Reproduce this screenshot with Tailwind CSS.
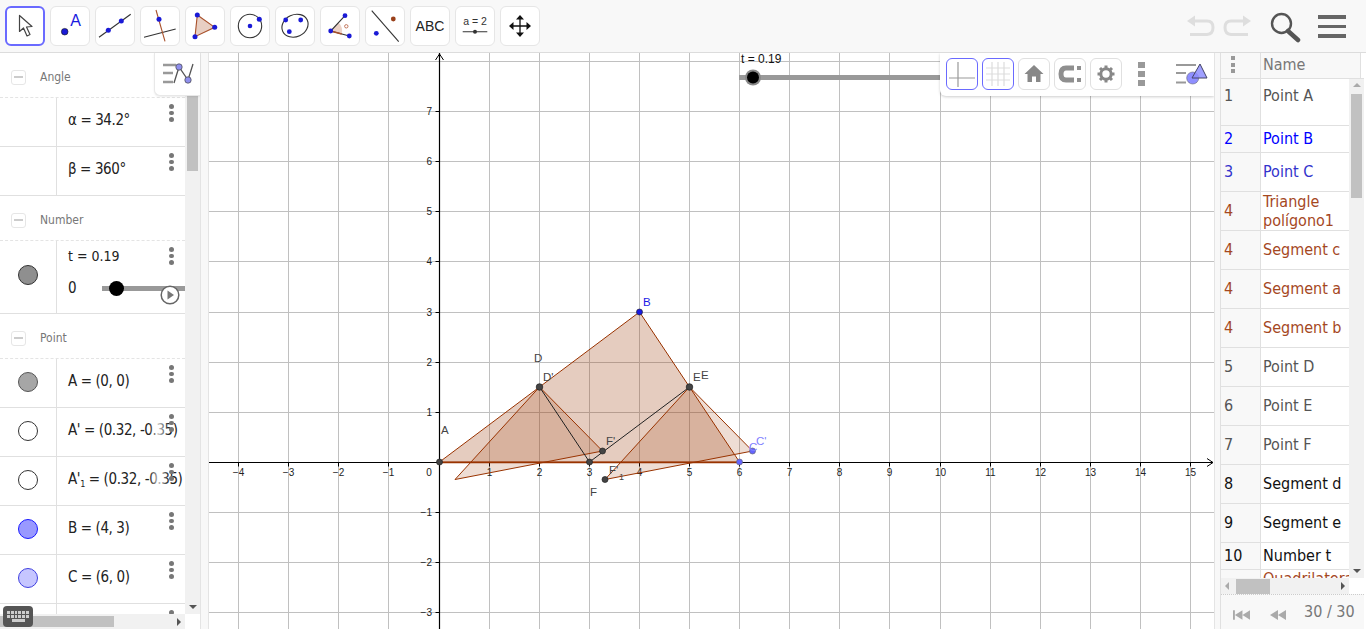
<!DOCTYPE html>
<html>
<head>
<meta charset="utf-8">
<script src="https://cdn.jsdelivr.net/npm/@tailwindcss/browser@4"></script>
</head>
<body class="bg-white overflow-hidden font-['DejaVu_Sans',sans-serif]">
<div class="flex flex-col w-[1366px] h-[629px]">

  <!-- Top toolbar -->
  <header class="h-[53px] shrink-0 bg-[#f8f8f8] border-b border-[#dcdcdc] flex items-start pt-[6px] pl-[5px] gap-[5px] relative">
    <button class="w-10 h-10 rounded-md bg-white border-2 border-[#6a6aff]"><svg viewBox="2 2 36 36" class="w-9 h-9 block"><path d="M14.500 9.500V25.500l4-3.500 3.500 8 3-1.500-3.500-7.500 5.500-.5z" fill="#fff" stroke="#444" stroke-width="1.200" stroke-linejoin="round"/></svg></button>
    <button class="w-10 h-10 rounded-md bg-white border border-[#e6e6e6]"><svg viewBox="1 1 38 38" class="w-[38px] h-[38px] block"><circle cx="14.700" cy="25.700" r="3.300" fill="#1a1ad6" stroke="#111" stroke-width=".6"/><text x="25.700" y="19.500" font-size="16" fill="#1a1ae0" text-anchor="middle" font-family="Liberation Sans">A</text></svg></button>
    <button class="w-10 h-10 rounded-md bg-white border border-[#e6e6e6]"><svg viewBox="1 1 38 38" class="w-[38px] h-[38px] block"><path d="M4 31.300 35.700 8.300" stroke="#333" stroke-width="1.100"/><circle cx="13.300" cy="24.300" r="2.500" fill="#1a1ad6"/><circle cx="26.300" cy="15" r="2.500" fill="#1a1ad6"/></svg></button>
    <button class="w-10 h-10 rounded-md bg-white border border-[#e6e6e6]"><svg viewBox="1 1 38 38" class="w-[38px] h-[38px] block"><path d="M4 31.300 35.700 23" stroke="#333" stroke-width="1.100"/><path d="M16 4 25 35.300" stroke="#a8502a" stroke-width="1.100"/><circle cx="19" cy="13.300" r="2.500" fill="#1a1ad6"/></svg></button>
    <button class="w-10 h-10 rounded-md bg-white border border-[#e6e6e6]"><svg viewBox="1 1 38 38" class="w-[38px] h-[38px] block"><path d="M12.300 9 29.700 21.300 10 30.700z" fill="#e8cfc3" stroke="#a8502a" stroke-width="1.100"/><circle cx="12.300" cy="9" r="2.500" fill="#1a1ad6"/><circle cx="29.700" cy="21.300" r="2.500" fill="#1a1ad6"/><circle cx="10" cy="30.700" r="2.500" fill="#1a1ad6"/></svg></button>
    <button class="w-10 h-10 rounded-md bg-white border border-[#e6e6e6]"><svg viewBox="1 1 38 38" class="w-[38px] h-[38px] block"><circle cx="20" cy="20" r="11.700" fill="none" stroke="#333" stroke-width="1.100"/><circle cx="20" cy="20" r="2.300" fill="#1a1ad6"/><circle cx="29.300" cy="13.300" r="2.500" fill="#1a1ad6"/></svg></button>
    <button class="w-10 h-10 rounded-md bg-white border border-[#e6e6e6]"><svg viewBox="1 1 38 38" class="w-[38px] h-[38px] block"><ellipse cx="20" cy="19.700" rx="13.500" ry="11" transform="rotate(-25 20 19.700)" fill="none" stroke="#333" stroke-width="1.100"/><circle cx="10.700" cy="14" r="2.400" fill="#1a1ad6"/><circle cx="25.700" cy="14" r="2.400" fill="#1a1ad6"/><circle cx="14.300" cy="25.700" r="2.400" fill="#1a1ad6"/></svg></button>
    <button class="w-10 h-10 rounded-md bg-white border border-[#e6e6e6]"><svg viewBox="1 1 38 38" class="w-[38px] h-[38px] block"><path d="M10.700 25 18.500 16.600A12 12 0 0 1 21.700 28z" fill="#ecd2c6"/><path d="M25 9.700 10.700 25 29.300 30" fill="none" stroke="#333" stroke-width="1.100"/><path d="M10.700 25 21.700 28" stroke="#a8502a" stroke-width="1.400"/><circle cx="26.300" cy="20.300" r="1.700" fill="none" stroke="#b5593a" stroke-width=".8"/><circle cx="10.700" cy="25" r="2.400" fill="#1a1ad6"/><circle cx="25" cy="9.700" r="2.400" fill="#1a1ad6"/><circle cx="29.300" cy="30" r="2.400" fill="#1a1ad6"/></svg></button>
    <button class="w-10 h-10 rounded-md bg-white border border-[#e6e6e6]"><svg viewBox="1 1 38 38" class="w-[38px] h-[38px] block"><path d="M6.700 4.700 33.700 35.700" stroke="#333" stroke-width="1.100"/><circle cx="11.300" cy="27.300" r="2.400" fill="#1a1ad6"/><circle cx="28.300" cy="13" r="2.400" fill="#99401a"/></svg></button>
    <button class="w-10 h-10 rounded-md bg-white border border-[#e6e6e6] text-[14px] text-[#222] font-['Liberation_Sans',sans-serif] leading-none">ABC</button>
    <button class="w-10 h-10 rounded-md bg-white border border-[#e6e6e6]"><svg viewBox="1 1 38 38" class="w-[38px] h-[38px] block"><text x="20" y="19" font-size="10.500" fill="#333" text-anchor="middle" font-family="Liberation Sans">a = 2</text><path d="M7.700 25.700H32.300" stroke="#555" stroke-width="1.200"/><circle cx="20" cy="25.700" r="2" fill="#333"/></svg></button>
    <button class="w-10 h-10 rounded-md bg-white border border-[#e6e6e6]"><svg viewBox="1 1 38 38" class="w-[38px] h-[38px] block"><path d="M20 12V28M12 20H28" stroke="#111" stroke-width="1.300"/><path d="M20 9l-4 4.500h8zM20 31l-4-4.500h8zM9 20l4.500-4v8zM31 20l-4.500-4v8z" fill="#111"/></svg></button>

    <div class="ml-auto flex items-start h-10">
      <svg viewBox="0 0 30 26" class="w-[30px] h-[26px] mt-[9px] mr-[6px] block"><path d="M9 6H21Q27 6 27 12.500T21 19.500H4" fill="none" stroke="#dedede" stroke-width="3"/><path d="M1 6 9 .5V11.500z" fill="#dedede"/></svg>
      <svg viewBox="0 0 30 26" class="w-[30px] h-[26px] mt-[9px] mr-[17px] block"><path d="M21 6H9Q3 6 3 12.500T9 19.500H26" fill="none" stroke="#dedede" stroke-width="3"/><path d="M29 6 21 .5V11.500z" fill="#dedede"/></svg>
      <svg viewBox="0 0 32 32" class="w-8 h-8 mt-[6px] mr-[17px] block"><circle cx="12.500" cy="11.500" r="9.500" fill="none" stroke="#555" stroke-width="2.400"/><path d="M19 19 29 28" stroke="#555" stroke-width="4.500" stroke-linecap="round"/></svg>
      <div class="w-7 mr-[20px] mt-[9px] flex flex-col gap-[6px]">
        <div class="h-[3.500px] bg-[#666]"></div><div class="h-[3.500px] bg-[#666]"></div><div class="h-[3.500px] bg-[#666]"></div>
      </div>
    </div>
  </header>

  <main class="flex-1 min-h-0 flex">
    <!-- Algebra panel -->
    <section class="w-[200px] shrink-0 relative flex flex-col text-[#222] font-['DejaVu_Sans_Condensed','DejaVu_Sans',sans-serif]">
      <div class="flex-1 min-h-0 flex">
        <div class="w-[185px] overflow-hidden">
          <div class="h-[45px] pt-[4px] border-b border-dashed border-[#e4e4e4] flex items-center pl-[11px] gap-[14px]"><span class="w-[15px] h-[15px] border border-[#e6e6e6] rounded-[3px] flex items-center justify-center"><span class="w-[9px] h-[1.500px] bg-[#ccc]"></span></span><span class="text-[12px] text-[#777]">Angle</span></div>

          <div class="h-[49px] border-b border-[#e0e0e0] flex"><div class="w-[57px] shrink-0 border-r border-[#e0e0e0]"></div><div class="flex-1 min-w-0 relative pl-[11px] pb-[3px] flex items-center whitespace-nowrap text-[15px] tracking-[-0.4px]">α = 34.2°<div class="absolute left-[112px] top-[6px] flex flex-col gap-[2.200px]"><i class="w-[4.500px] h-[4.500px] rounded-full bg-[#777]"></i><i class="w-[4.500px] h-[4.500px] rounded-full bg-[#777]"></i><i class="w-[4.500px] h-[4.500px] rounded-full bg-[#777]"></i></div></div></div>
          <div class="h-[49px] border-b border-[#e0e0e0] flex"><div class="w-[57px] shrink-0 border-r border-[#e0e0e0]"></div><div class="flex-1 min-w-0 relative pl-[11px] pb-[3px] flex items-center whitespace-nowrap text-[15px] tracking-[-0.4px]">β = 360°<div class="absolute left-[112px] top-[6px] flex flex-col gap-[2.200px]"><i class="w-[4.500px] h-[4.500px] rounded-full bg-[#777]"></i><i class="w-[4.500px] h-[4.500px] rounded-full bg-[#777]"></i><i class="w-[4.500px] h-[4.500px] rounded-full bg-[#777]"></i></div></div></div>

          <div class="h-[45px] pt-[4px] border-b border-dashed border-[#e4e4e4] flex items-center pl-[11px] gap-[14px]"><span class="w-[15px] h-[15px] border border-[#e6e6e6] rounded-[3px] flex items-center justify-center"><span class="w-[9px] h-[1.500px] bg-[#ccc]"></span></span><span class="text-[12px] text-[#777]">Number</span></div>

          <div class="h-[73px] border-b border-[#e0e0e0] flex">
            <div class="w-[57px] shrink-0 border-r border-[#e0e0e0] flex items-center justify-center pb-[5px]"><span class="w-5 h-5 rounded-full bg-[#8f8f8f] border border-[#333]"></span></div>
            <div class="flex-1 min-w-0 relative pl-[11px] whitespace-nowrap text-[14px]">
              <div class="pt-[7px] leading-[17px]">t = 0.19</div>
              <div class="mt-[13px] leading-[20px] text-[15px]">0</div>
              <div class="absolute left-[45px] right-0 top-[45px] h-[5px] bg-[#999]"></div>
              <div class="absolute left-[52px] top-[40px] w-[15px] h-[15px] rounded-full bg-black"></div>
              <svg viewBox="0 0 20 20" class="absolute left-[103px] top-[44px] w-5 h-5"><circle cx="10" cy="10" r="8.800" fill="#fff" stroke="#666" stroke-width="1.500"/><path d="M7.500 5.500 14 10 7.500 14.500z" fill="#777"/></svg>
              <div class="absolute left-[112px] top-[6px] flex flex-col gap-[2.200px]"><i class="w-[4.500px] h-[4.500px] rounded-full bg-[#777]"></i><i class="w-[4.500px] h-[4.500px] rounded-full bg-[#777]"></i><i class="w-[4.500px] h-[4.500px] rounded-full bg-[#777]"></i></div>
            </div>
          </div>

          <div class="h-[45px] pt-[4px] border-b border-dashed border-[#e4e4e4] flex items-center pl-[11px] gap-[14px]"><span class="w-[15px] h-[15px] border border-[#e6e6e6] rounded-[3px] flex items-center justify-center"><span class="w-[9px] h-[1.500px] bg-[#ccc]"></span></span><span class="text-[12px] text-[#777]">Point</span></div>

          <div class="h-[49px] border-b border-[#e0e0e0] flex"><div class="w-[57px] shrink-0 border-r border-[#e0e0e0] flex items-center justify-center pb-[3px]"><span class="w-5 h-5 rounded-full bg-[#a6a6a6] border border-[#555]"></span></div><div class="flex-1 min-w-0 relative pl-[11px] pb-[3px] flex items-center whitespace-nowrap text-[15px] tracking-[-0.4px]">A = (0, 0)<div class="absolute left-[112px] top-[6px] flex flex-col gap-[2.200px]"><i class="w-[4.500px] h-[4.500px] rounded-full bg-[#777]"></i><i class="w-[4.500px] h-[4.500px] rounded-full bg-[#777]"></i><i class="w-[4.500px] h-[4.500px] rounded-full bg-[#777]"></i></div></div></div>
          <div class="h-[49px] border-b border-[#e0e0e0] flex"><div class="w-[57px] shrink-0 border-r border-[#e0e0e0] flex items-center justify-center pb-[3px]"><span class="w-5 h-5 rounded-full bg-white border border-[#333]"></span></div><div class="flex-1 min-w-0 relative pl-[11px] pb-[3px] flex items-center whitespace-nowrap text-[15px] tracking-[-0.4px]">A' = (0.32, -0.35)<div class="absolute left-[92px] top-0 bottom-0 w-[20px] bg-linear-to-r from-transparent via-white/70 to-transparent"></div><div class="absolute left-[112px] top-[6px] flex flex-col gap-[2.200px]"><i class="w-[4.500px] h-[4.500px] rounded-full bg-[#777]"></i><i class="w-[4.500px] h-[4.500px] rounded-full bg-[#777]"></i><i class="w-[4.500px] h-[4.500px] rounded-full bg-[#777]"></i></div></div></div>
          <div class="h-[49px] border-b border-[#e0e0e0] flex"><div class="w-[57px] shrink-0 border-r border-[#e0e0e0] flex items-center justify-center pb-[3px]"><span class="w-5 h-5 rounded-full bg-white border border-[#333]"></span></div><div class="flex-1 min-w-0 relative pl-[11px] pb-[3px] flex items-center whitespace-nowrap text-[15px] tracking-[-0.4px]"><span>A'<sub class="text-[9px]">1</sub> = (0.32, -0.35)</span><div class="absolute left-[92px] top-0 bottom-0 w-[20px] bg-linear-to-r from-transparent via-white/70 to-transparent"></div><div class="absolute left-[112px] top-[6px] flex flex-col gap-[2.200px]"><i class="w-[4.500px] h-[4.500px] rounded-full bg-[#777]"></i><i class="w-[4.500px] h-[4.500px] rounded-full bg-[#777]"></i><i class="w-[4.500px] h-[4.500px] rounded-full bg-[#777]"></i></div></div></div>
          <div class="h-[49px] border-b border-[#e0e0e0] flex"><div class="w-[57px] shrink-0 border-r border-[#e0e0e0] flex items-center justify-center pb-[3px]"><span class="w-5 h-5 rounded-full bg-[#9999ff] border border-[#1a1aff]"></span></div><div class="flex-1 min-w-0 relative pl-[11px] pb-[3px] flex items-center whitespace-nowrap text-[15px] tracking-[-0.4px]">B = (4, 3)<div class="absolute left-[112px] top-[6px] flex flex-col gap-[2.200px]"><i class="w-[4.500px] h-[4.500px] rounded-full bg-[#777]"></i><i class="w-[4.500px] h-[4.500px] rounded-full bg-[#777]"></i><i class="w-[4.500px] h-[4.500px] rounded-full bg-[#777]"></i></div></div></div>
          <div class="h-[49px] border-b border-[#e0e0e0] flex"><div class="w-[57px] shrink-0 border-r border-[#e0e0e0] flex items-center justify-center pb-[3px]"><span class="w-5 h-5 rounded-full bg-[#c6c6ff] border border-[#4040e0]"></span></div><div class="flex-1 min-w-0 relative pl-[11px] pb-[3px] flex items-center whitespace-nowrap text-[15px] tracking-[-0.4px]">C = (6, 0)<div class="absolute left-[112px] top-[6px] flex flex-col gap-[2.200px]"><i class="w-[4.500px] h-[4.500px] rounded-full bg-[#777]"></i><i class="w-[4.500px] h-[4.500px] rounded-full bg-[#777]"></i><i class="w-[4.500px] h-[4.500px] rounded-full bg-[#777]"></i></div></div></div>
          <div class="h-[49px] flex"><div class="w-[57px] shrink-0 border-r border-[#e0e0e0]"></div><div class="flex-1 relative"><div class="absolute left-[112px] top-[6px] flex flex-col gap-[2.200px]"><i class="w-[4.500px] h-[4.500px] rounded-full bg-[#777]"></i><i class="w-[4.500px] h-[4.500px] rounded-full bg-[#777]"></i></div></div></div>
        </div>
        <!-- vertical scrollbar -->
        <div class="w-[15px] bg-[#f1f1f1] flex flex-col items-center relative">
          <div class="w-[11px] h-[118px] bg-[#c1c1c1]"></div>
          <div class="mt-auto mb-[5px] w-0 h-0 border-x-[4px] border-x-transparent border-t-[4px] border-t-[#555]"></div>
        </div>
      </div>
      <!-- horizontal scrollbar -->
      <div class="h-[15px] w-[185px] bg-[#f1f1f1] flex items-center shrink-0">
        <div class="w-[114px] h-[11px] bg-[#c1c1c1]"></div>
        <div class="ml-auto mr-[4px] w-0 h-0 border-y-[4px] border-y-transparent border-l-[4px] border-l-[#555]"></div>
      </div>
      <!-- keyboard -->
      <div class="absolute left-[3px] bottom-[2px] w-[30px] h-[21px] rounded-[4px] bg-[#555] flex flex-col items-center justify-center gap-[1px]">
        <div class="grid grid-cols-6 gap-[1px] w-[22px]"><i class="h-[3px] bg-[#ccc]"></i><i class="h-[3px] bg-[#ccc]"></i><i class="h-[3px] bg-[#ccc]"></i><i class="h-[3px] bg-[#ccc]"></i><i class="h-[3px] bg-[#ccc]"></i><i class="h-[3px] bg-[#ccc]"></i><i class="h-[3px] bg-[#ccc]"></i><i class="h-[3px] bg-[#ccc]"></i><i class="h-[3px] bg-[#ccc]"></i><i class="h-[3px] bg-[#ccc]"></i><i class="h-[3px] bg-[#ccc]"></i><i class="h-[3px] bg-[#ccc]"></i></div>
        <div class="w-[13px] h-[3px] bg-[#ccc]"></div>
      </div>
      <!-- algebra style toggle -->
      <div class="absolute right-0 top-0 w-[46px] h-[43px] bg-white rounded-bl-md border-l border-b border-[#e8e8e8] shadow-[0_1px_2px_rgba(0,0,0,0.08)]">
        <svg viewBox="0 0 46 43" class="w-[46px] h-[43px] block"><path d="M8 12H21M8 20H18M8 29H18" stroke="#999" stroke-width="2.500"/><path d="M19 30 24 14 33 27 38 11" fill="none" stroke="#555" stroke-width="1.300"/><circle cx="24" cy="14" r="3.200" fill="#8f8fee" stroke="#444" stroke-width=".7"/><circle cx="33" cy="27" r="3.200" fill="#8f8fee" stroke="#444" stroke-width=".7"/></svg>
      </div>
    </section>

    <div class="w-[8px] shrink-0 bg-[#f8f8f8] border-l border-[#e4e4e4]"></div>

    <!-- Graphics view -->
    <section class="w-[1006px] shrink-0 relative border-l border-[#e4e4e4] overflow-hidden">
      <svg viewBox="209 53 1005 576" class="w-[1005px] h-[576px] block">
        <path d="M238.500 53V629M288.500 53V629M338.500 53V629M388.500 53V629M489.500 53V629M539.500 53V629M589.500 53V629M639.500 53V629M689.500 53V629M739.500 53V629M789.500 53V629M839.500 53V629M889.500 53V629M940.500 53V629M990.500 53V629M1040.500 53V629M1090.500 53V629M1140.500 53V629M1190.500 53V629M209 61.500H1214M209 111.500H1214M209 161.500H1214M209 211.500H1214M209 261.500H1214M209 312.500H1214M209 362.500H1214M209 412.500H1214M209 512.500H1214M209 562.500H1214M209 612.500H1214" stroke="#c0c0c0" stroke-width="1" fill="none"/>
        <path d="M439.500 53V629M209 462.500H1213" stroke="#000" stroke-width="1.200" fill="none"/>
        <path d="M435.500 60 439.500 54 443.500 60M1207 458.500 1213 462.500 1207 466.500" fill="none" stroke="#000" stroke-width="1"/>
        <path d="M238.500 462.500v4M288.500 462.500v4M338.500 462.500v4M388.500 462.500v4M489.500 462.500v4M539.500 462.500v4M589.500 462.500v4M639.500 462.500v4M689.500 462.500v4M739.500 462.500v4M789.500 462.500v4M839.500 462.500v4M889.500 462.500v4M940.500 462.500v4M990.500 462.500v4M1040.500 462.500v4M1090.500 462.500v4M1140.500 462.500v4M1190.500 462.500v4M439.500 111.500h-4M439.500 161.500h-4M439.500 211.500h-4M439.500 261.500h-4M439.500 312.500h-4M439.500 362.500h-4M439.500 412.500h-4M439.500 512.500h-4M439.500 562.500h-4M439.500 612.500h-4" stroke="#000" stroke-width="1" fill="none"/>

        <g font-family="Liberation Sans" font-size="10" fill="#222" text-anchor="middle">
          <text x="238.500" y="476">−4</text><text x="288.500" y="476">−3</text><text x="338.500" y="476">−2</text><text x="388.500" y="476">−1</text><text x="429" y="476">0</text><text x="489.500" y="476">1</text><text x="539.500" y="476">2</text><text x="589.500" y="476">3</text><text x="639.500" y="476">4</text><text x="689.500" y="476">5</text><text x="739.500" y="476">6</text><text x="789.500" y="476">7</text><text x="839.500" y="476">8</text><text x="889.500" y="476">9</text><text x="940.500" y="476">10</text><text x="990.500" y="476">11</text><text x="1040.500" y="476">12</text><text x="1090.500" y="476">13</text><text x="1140.500" y="476">14</text><text x="1190.500" y="476">15</text>
        </g>
        <g font-family="Liberation Sans" font-size="10" fill="#222" text-anchor="end">
          <text x="432" y="115">7</text><text x="432" y="165">6</text><text x="432" y="215">5</text><text x="432" y="265">4</text><text x="432" y="316">3</text><text x="432" y="366">2</text><text x="432" y="416">1</text><text x="432" y="516">−1</text><text x="432" y="566">−2</text><text x="432" y="616">−3</text>
        </g>

        <g stroke="#993300" stroke-width="1" stroke-linejoin="round">
          <path d="M439.500 462 639.500 312 739.500 462z" fill="#993300" fill-opacity=".25"/>
          <path d="M455 479.500 539.500 387 602.500 451z" fill="#993300" fill-opacity=".17"/>
          <path d="M605 479.500 689.500 387 752.500 451z" fill="#993300" fill-opacity=".17"/>
          <path d="M439.500 462.500H739.500" stroke-width="1.600"/>
        </g>
        <path d="M539.500 387 589.500 462 689.500 387" fill="none" stroke="#222" stroke-width="1"/>
        <circle cx="439.500" cy="462" r="3" fill="#444" stroke="#222" stroke-width=".7"/>
        <circle cx="639.500" cy="312" r="3" fill="#1a1ae6" stroke="#223" stroke-width=".7"/>
        <circle cx="539.500" cy="387" r="3.300" fill="#444" stroke="#222" stroke-width=".7"/>
        <circle cx="689.500" cy="387" r="3.300" fill="#444" stroke="#222" stroke-width=".7"/>
        <circle cx="589.500" cy="462" r="3" fill="#444" stroke="#222" stroke-width=".7"/>
        <circle cx="739.500" cy="462" r="3" fill="#6464ff" stroke="#667" stroke-width=".7"/>
        <circle cx="602.500" cy="451" r="3" fill="#444" stroke="#222" stroke-width=".7"/>
        <circle cx="605" cy="479.500" r="3" fill="#444" stroke="#222" stroke-width=".7"/>
        <circle cx="752.500" cy="451" r="3" fill="#6464ff" stroke="#667" stroke-width=".7"/>

        <g font-family="Liberation Sans" font-size="11.500" fill="#444">
          <text x="441" y="434">A</text>
          <text x="643" y="306" fill="#1a1ae6">B</text>
          <text x="534" y="362">D</text>
          <text x="543" y="381">D'</text>
          <text x="693" y="381">E</text>
          <text x="701" y="379">E</text>
          <text x="606" y="445">F'</text>
          <text x="590" y="496">F</text>
          <text x="609" y="474">F'</text>
          <text x="619" y="480" font-size="9">1</text>
          <text x="749" y="451" fill="#8080ff">C</text>
          <text x="756" y="445" fill="#8080ff">C'</text>
        </g>

        <text x="741" y="63" font-family="Liberation Sans" font-size="12" fill="#111">t = 0.19</text>
        <path d="M739 77.500H945" stroke="#999" stroke-width="5"/>
        <circle cx="753" cy="77.500" r="8" fill="#888"/>
        <circle cx="753" cy="77.500" r="6" fill="#000"/>
      </svg>

      <!-- style bar -->
      <div class="absolute right-0 top-0 w-[274px] h-[43px] bg-white rounded-bl-md shadow-[0_1px_3px_rgba(0,0,0,0.2)] flex items-start pt-[5px] pl-[6px] gap-[4px]">
        <div class="w-8 h-8 rounded-md border border-[#6a6aff] bg-white"><svg viewBox="0 0 30 30" class="w-[30px] h-[30px] block"><path d="M11 3V28M2 19H28" stroke="#999" stroke-width="1.200"/></svg></div>
        <div class="w-8 h-8 rounded-md border border-[#6a6aff] bg-white"><svg viewBox="0 0 30 30" class="w-[30px] h-[30px] block"><path d="M9 3V27M15 3V27M21 3V27M3 9H27M3 15H27M3 21H27" stroke="#ddd" stroke-width="1.200"/></svg></div>
        <div class="w-8 h-8 rounded-md border border-[#e0e0e0] bg-white"><svg viewBox="0 0 30 30" class="w-[30px] h-[30px] block"><path d="M15 6 5.500 15H8.500V23H13V17.500H17V23H21.500V15H24.500z" fill="#888"/></svg></div>
        <div class="w-8 h-8 rounded-md border border-[#e0e0e0] bg-white"><svg viewBox="0 0 30 30" class="w-[30px] h-[30px] block"><path d="M19 9H11Q6 9 6 15T11 21H19" fill="none" stroke="#8f8f8f" stroke-width="5"/><path d="M22 7H26V11H22zM22 19H26V23H22z" fill="#8f8f8f"/></svg></div>
        <div class="w-8 h-8 rounded-md border border-[#e0e0e0] bg-white"><svg viewBox="0 0 30 30" class="w-[30px] h-[30px] block"><circle cx="15" cy="15" r="5.200" fill="none" stroke="#888" stroke-width="3"/><path d="M15 6.500V9M15 21V23.500M6.500 15H9M21 15H23.500M9 9 10.800 10.800M19.200 19.200 21 21M21 9 19.200 10.800M10.800 19.200 9 21" stroke="#888" stroke-width="3"/></svg></div>
        <div class="w-[6.500px] ml-[12px] mt-[4px] flex flex-col gap-[3.500px]"><i class="block h-[5.500px] bg-[#999]"></i><i class="block h-[5.500px] bg-[#999]"></i><i class="block h-[5.500px] bg-[#999]"></i></div>
        <svg viewBox="0 0 36 30" class="w-9 h-[30px] ml-[25px] block"><path d="M2 7H22M2 15H12M2 24.500H12" stroke="#999" stroke-width="2"/><circle cx="18.700" cy="20" r="6" fill="#8f8fff" stroke="#667" stroke-width=".6"/><path d="M26 6 33 20H18z" fill="#8f8fff" fill-opacity=".85" stroke="#446" stroke-width="1"/></svg>
      </div>
    </section>

    <div class="w-[6px] shrink-0 bg-[#f8f8f8] border-l border-[#e4e4e4]"></div>

    <!-- Table panel -->
    <section class="flex-1 min-w-0 flex flex-col border-l border-[#e0e0e0] text-[16px] mr-[2px] font-['DejaVu_Sans_Condensed','DejaVu_Sans',sans-serif]">
      <div class="h-[26px] shrink-0 flex border-b border-[#e0e0e0]">
        <div class="w-[40px] bg-[#f8f8f8] border-r border-[#e0e0e0] flex flex-col items-center pt-[3px] pr-[16px] gap-[2.500px]"><i class="w-1 h-1 bg-[#999]"></i><i class="w-1 h-1 bg-[#999]"></i><i class="w-1 h-1 bg-[#999]"></i></div>
        <div class="w-[100px] bg-[#f8f8f8] border-r border-[#e0e0e0] pl-[2px] text-[#777] leading-[23px]">Name</div>
      </div>
      <div class="flex-1 min-h-0 flex">
        <div class="w-[128px] overflow-hidden">
          <div class="h-[47px] flex border-b border-[#e0e0e0] text-[#555]"><div class="w-[40px] shrink-0 bg-[#f8f8f8] border-r border-[#e0e0e0] pl-[3px] pt-[5px]">1</div><div class="flex-1 min-w-0 pl-[2px] pt-[5px]">Point A</div></div>
          <div class="h-[27px] flex items-center border-b border-[#e0e0e0] text-[#0000ff]"><div class="w-[40px] shrink-0 h-full flex items-center bg-[#f8f8f8] border-r border-[#e0e0e0] pl-[3px]">2</div><div class="flex-1 min-w-0 pl-[2px]">Point B</div></div>
          <div class="h-[39px] flex items-center border-b border-[#e0e0e0] text-[#3333cc]"><div class="w-[40px] shrink-0 h-full flex items-center bg-[#f8f8f8] border-r border-[#e0e0e0] pl-[3px]">3</div><div class="flex-1 min-w-0 pl-[2px]">Point C</div></div>
          <div class="h-[39px] flex items-center border-b border-[#e0e0e0] text-[#a5481f]"><div class="w-[40px] shrink-0 h-full flex items-center bg-[#f8f8f8] border-r border-[#e0e0e0] pl-[3px]">4</div><div class="flex-1 min-w-0 pl-[2px] leading-[19px] whitespace-nowrap">Triangle<br>polígono1</div></div>
          <div class="h-[39px] flex items-center border-b border-[#e0e0e0] text-[#a5481f]"><div class="w-[40px] shrink-0 h-full flex items-center bg-[#f8f8f8] border-r border-[#e0e0e0] pl-[3px]">4</div><div class="flex-1 min-w-0 pl-[2px]">Segment c</div></div>
          <div class="h-[39px] flex items-center border-b border-[#e0e0e0] text-[#a5481f]"><div class="w-[40px] shrink-0 h-full flex items-center bg-[#f8f8f8] border-r border-[#e0e0e0] pl-[3px]">4</div><div class="flex-1 min-w-0 pl-[2px]">Segment a</div></div>
          <div class="h-[39px] flex items-center border-b border-[#e0e0e0] text-[#a5481f]"><div class="w-[40px] shrink-0 h-full flex items-center bg-[#f8f8f8] border-r border-[#e0e0e0] pl-[3px]">4</div><div class="flex-1 min-w-0 pl-[2px]">Segment b</div></div>
          <div class="h-[39px] flex items-center border-b border-[#e0e0e0] text-[#555]"><div class="w-[40px] shrink-0 h-full flex items-center bg-[#f8f8f8] border-r border-[#e0e0e0] pl-[3px]">5</div><div class="flex-1 min-w-0 pl-[2px]">Point D</div></div>
          <div class="h-[39px] flex items-center border-b border-[#e0e0e0] text-[#555]"><div class="w-[40px] shrink-0 h-full flex items-center bg-[#f8f8f8] border-r border-[#e0e0e0] pl-[3px]">6</div><div class="flex-1 min-w-0 pl-[2px]">Point E</div></div>
          <div class="h-[39px] flex items-center border-b border-[#e0e0e0] text-[#555]"><div class="w-[40px] shrink-0 h-full flex items-center bg-[#f8f8f8] border-r border-[#e0e0e0] pl-[3px]">7</div><div class="flex-1 min-w-0 pl-[2px]">Point F</div></div>
          <div class="h-[39px] flex items-center border-b border-[#e0e0e0] text-[#111]"><div class="w-[40px] shrink-0 h-full flex items-center bg-[#f8f8f8] border-r border-[#e0e0e0] pl-[3px]">8</div><div class="flex-1 min-w-0 pl-[2px]">Segment d</div></div>
          <div class="h-[39px] flex items-center border-b border-[#e0e0e0] text-[#111]"><div class="w-[40px] shrink-0 h-full flex items-center bg-[#f8f8f8] border-r border-[#e0e0e0] pl-[3px]">9</div><div class="flex-1 min-w-0 pl-[2px]">Segment e</div></div>
          <div class="h-[27px] flex items-center border-b border-[#e0e0e0] text-[#111]"><div class="w-[40px] shrink-0 h-full flex items-center bg-[#f8f8f8] border-r border-[#e0e0e0] pl-[3px]">10</div><div class="flex-1 min-w-0 pl-[2px]">Number t</div></div>
          <div class="h-[39px] flex text-[#a5481f]"><div class="w-[40px] shrink-0 h-full bg-[#f8f8f8] border-r border-[#e0e0e0]"></div><div class="flex-1 min-w-0 pl-[2px] whitespace-nowrap leading-[18px]">Quadrilatera</div></div>
        </div>
        <div class="w-[15px] bg-[#f1f1f1] flex flex-col items-center">
          <div class="mt-[4px] w-0 h-0 border-x-[4px] border-x-transparent border-b-[4px] border-b-[#aaa]"></div>
          <div class="mt-[7px] w-[11px] h-[104px] bg-[#c1c1c1]"></div>
          <div class="mt-auto mb-[5px] w-0 h-0 border-x-[4px] border-x-transparent border-t-[4px] border-t-[#555]"></div>
        </div>
      </div>
      <div class="h-[16px] shrink-0 flex">
        <div class="w-[128px] bg-[#f1f1f1] flex items-center relative">
          <div class="ml-[4px] w-0 h-0 border-y-[4px] border-y-transparent border-r-[4px] border-r-[#aaa]"></div>
          <div class="ml-[7px] w-[34px] h-[15px] bg-[#c1c1c1]"></div>
          <div class="ml-auto mr-[4px] w-0 h-0 border-y-[4px] border-y-transparent border-l-[4px] border-l-[#555]"></div>
        </div>
      </div>
      <div class="h-[35px] shrink-0 border-t border-dotted border-[#ccc] bg-[#f8f8f8] flex items-center text-[#777]">
        <svg viewBox="0 0 18 10" class="w-[17px] h-[10px] ml-[12px] mt-[5px] block"><path d="M0 0H2V10H0zM10 0V10L2 5zM18 0V10L10 5z" fill="#aaa"/></svg>
        <svg viewBox="0 0 16 10" class="w-[16px] h-[10px] ml-[20px] mt-[5px] block"><path d="M8 0V10L0 5zM16 0V10L8 5z" fill="#aaa"/></svg>
        <span class="ml-[18px] whitespace-nowrap">30 / 30</span>
      </div>
    </section>
  </main>
</div>
</body>
</html>
